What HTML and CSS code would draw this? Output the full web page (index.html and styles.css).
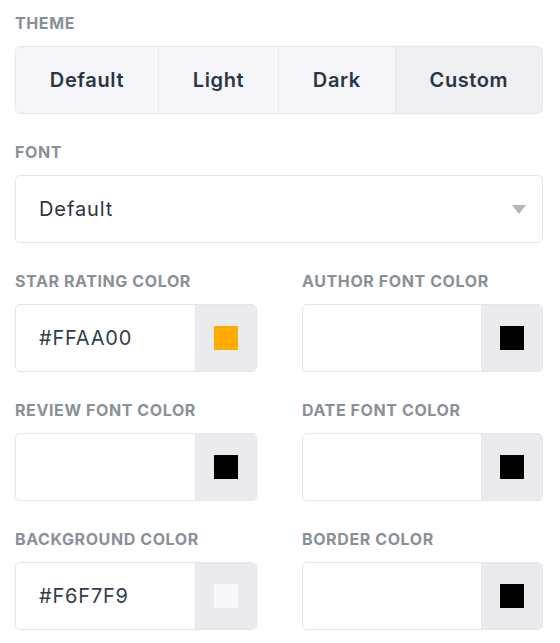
FILE: index.html
```html
<!DOCTYPE html>
<html lang="en">
<head>
<meta charset="utf-8">
<link rel="stylesheet" href="styles.css">
</head>
<body>
<div class="panel">
  <div class="field">
    <div class="label">Theme</div>
    <div class="segmented">
      <div class="seg">Default</div>
      <div class="seg">Light</div>
      <div class="seg">Dark</div>
      <div class="seg active">Custom</div>
    </div>
  </div>
  <div class="field">
    <div class="label">Font</div>
    <div class="select">
      <span class="select-value">Default</span>
      <svg class="caret" width="14" height="9" viewBox="0 0 14 9"><path d="M0 0 H14 L7 9 Z" fill="#b3b7bd"/></svg>
    </div>
  </div>
  <div class="grid">
    <div class="field">
      <div class="label">Star rating color</div>
      <div class="color-input">
        <span class="hex">#FFAA00</span>
        <span class="swatch-box"><span class="swatch sw-orange"></span></span>
      </div>
    </div>
    <div class="field">
      <div class="label">Author font color</div>
      <div class="color-input">
        <span class="hex"></span>
        <span class="swatch-box"><span class="swatch sw-black"></span></span>
      </div>
    </div>
    <div class="field">
      <div class="label">Review font color</div>
      <div class="color-input">
        <span class="hex"></span>
        <span class="swatch-box"><span class="swatch sw-black"></span></span>
      </div>
    </div>
    <div class="field">
      <div class="label">Date font color</div>
      <div class="color-input">
        <span class="hex"></span>
        <span class="swatch-box"><span class="swatch sw-black"></span></span>
      </div>
    </div>
    <div class="field">
      <div class="label">Background color</div>
      <div class="color-input">
        <span class="hex">#F6F7F9</span>
        <span class="swatch-box"><span class="swatch sw-light"></span></span>
      </div>
    </div>
    <div class="field">
      <div class="label">Border color</div>
      <div class="color-input">
        <span class="hex"></span>
        <span class="swatch-box"><span class="swatch sw-black"></span></span>
      </div>
    </div>
  </div>
</div>
</body>
</html>
```

FILE: styles.css
```css
* { box-sizing: border-box; }
html, body { margin: 0; padding: 0; background: #ffffff; }
body {
  font-family: Inter, "Noto Sans", sans-serif;
  color: #2b3544;
}
.panel {
  width: 528px;
  margin-left: 15px;
  padding-top: 12px;
  display: flex;
  flex-direction: column;
  gap: 27px;
}
.field {
  display: flex;
  flex-direction: column;
  gap: 12px;
}
.label {
  font-size: 16px;
  line-height: 22px;
  font-weight: 700;
  color: #8a9098;
  text-transform: uppercase;
  letter-spacing: 0.6px;
}
.segmented {
  display: flex;
  height: 68px;
  border: 1px solid #e3e6ea;
  border-radius: 5px;
  background: #f5f6f9;
  overflow: hidden;
}
.seg {
  flex: 1 1 auto;
  display: flex;
  align-items: center;
  justify-content: center;
  font-size: 20px;
  font-weight: 600;
  letter-spacing: 0.6px;
  color: #2b3544;
  border-left: 1px solid #e6e8ec;
}
.seg:first-child { border-left: none; }
.seg.active { background: #eef0f3; }
.select {
  height: 68px;
  border: 1px solid #e3e6ea;
  border-radius: 5px;
  display: flex;
  align-items: center;
  justify-content: space-between;
  padding: 0 16px 0 23px;
  font-size: 20px;
  letter-spacing: 0.9px;
  color: #2b3544;
}
.grid {
  display: grid;
  grid-template-columns: 242px 241px;
  column-gap: 45px;
  row-gap: 27px;
}
.color-input {
  height: 68px;
  border: 1px solid #e3e6ea;
  border-radius: 5px;
  display: flex;
  overflow: hidden;
}
.hex {
  flex: 1;
  display: flex;
  align-items: center;
  padding-left: 23px;
  font-size: 20px;
  letter-spacing: 0.8px;
  color: #333d4b;
}
.swatch-box {
  width: 61px;
  background: #e9ebee;
  border-left: 1px solid #e3e6ea;
  display: flex;
  align-items: center;
  justify-content: center;
}
.swatch { width: 24px; height: 24px; display: block; }
.sw-orange { background: #ffaa00; }
.sw-black { background: #000000; }
.sw-light { background: #f6f7f9; }
```
